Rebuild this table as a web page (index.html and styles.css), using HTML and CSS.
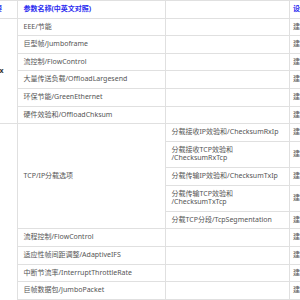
FILE: index.html
```html
<!DOCTYPE html>
<html>
<head>
<meta charset="utf-8">
<link rel="stylesheet" href="styles.css">
</head>
<body>
<div class="wrap">
<table class="params">
  <colgroup>
    <col class="c1"><col class="c2"><col class="c3"><col class="c4">
  </colgroup>
  <thead>
    <tr><th class="first">概要</th><th>参数名称(中英文对照)</th><th></th><th class="last">设置建议</th></tr>
  </thead>
  <tbody>
    <tr><td class="grp" rowspan="6">82x</td><td>EEE/节能</td><td></td><td class="last">建议关闭</td></tr>
    <tr><td>巨型帧/Jumboframe</td><td></td><td class="last">建议关闭</td></tr>
    <tr><td>流控制/FlowControl</td><td></td><td class="last">建议关闭</td></tr>
    <tr><td>大量传送负载/OffloadLargesend</td><td></td><td class="last">建议关闭</td></tr>
    <tr><td>环保节能/GreenEthernet</td><td></td><td class="last">建议关闭</td></tr>
    <tr><td>硬件效验和/OffloadChksum</td><td></td><td class="last">建议关闭</td></tr>
    <tr><td class="grp" rowspan="12"></td><td rowspan="5">TCP/IP分载选项</td><td>分载接收IP效验和/ChecksumRxIp</td><td class="last">建议关闭</td></tr>
    <tr><td>分载接收TCP效验和<br>/ChecksumRxTcp</td><td class="last">建议关闭</td></tr>
    <tr><td>分载传输IP效验和/ChecksumTxIp</td><td class="last">建议关闭</td></tr>
    <tr><td>分载传输TCP效验和<br>/ChecksumTxTcp</td><td class="last">建议关闭</td></tr>
    <tr><td>分载TCP分段/TcpSegmentation</td><td class="last">建议关闭</td></tr>
    <tr><td>流程控制/FlowControl</td><td></td><td class="last">建议关闭</td></tr>
    <tr><td>适应性帧间距调整/AdaptiveIFS</td><td></td><td class="last">建议关闭</td></tr>
    <tr><td>中断节流率/InterruptThrottleRate</td><td></td><td class="last">建议关闭</td></tr>
    <tr><td>巨帧数据包/JumboPacket</td><td></td><td class="last">建议关闭</td></tr>
    <tr><td>接收缓冲区/ReceiveBuffers</td><td></td><td class="last">建议关闭</td></tr>
    <tr><td>传输缓冲区/TransmitBuffers</td><td></td><td class="last">建议关闭</td></tr>
  </tbody>
</table>
</div>
</body>
</html>
```
FILE: styles.css
```css
html, body {
  margin: 0;
  padding: 0;
  background: #fff;
}
.wrap {
  width: 300px;
  height: 300px;
  overflow: hidden;
}
.params {
  border-collapse: collapse;
  table-layout: fixed;
  width: 366px;
  margin-left: -17px;
  font-family: "Noto Sans", "Noto Sans CJK SC", sans-serif;
  font-size: 7px;
  line-height: 8.6px;
  color: #555;
}
.c1 { width: 34px; }
.c2 { width: 148px; }
.c3 { width: 124px; }
.c4 { width: 60px; }
.params th, .params td {
  border: 1px solid #e0e0e0;
  padding: 4px 5.5px;
  text-align: left;
  vertical-align: middle;
  white-space: nowrap;
  overflow: hidden;
}
.params th {
  color: #2a2af0;
  font-weight: bold;
}
.params th.first {
  padding-left: 4px;
}
.params td.grp {
  color: #333;
  font-weight: bold;
  padding-left: 7.5px;
}
.params .last {
  padding-left: 3px;
}
```
